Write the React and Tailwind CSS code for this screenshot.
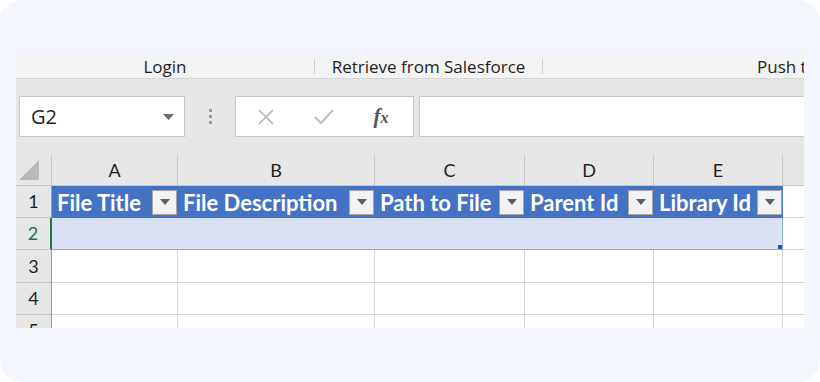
import React from 'react'

const cols = [
  { key: 'A', w: 126, title: 'File Title' },
  { key: 'B', w: 197, title: 'File Description' },
  { key: 'C', w: 150, title: 'Path to File' },
  { key: 'D', w: 129, title: 'Parent Id' },
  { key: 'E', w: 129, title: 'Library Id' },
  { key: 'F', w: 40, title: null },
]

const rowHeights = [32, 32, 33, 32, 32]

function FilterButton() {
  return (
    <div className="w-[25px] h-[25px] shrink-0 border border-[#a6a6a6] bg-[#f2f2f2] flex items-center justify-center">
      <svg width="10" height="6" viewBox="0 0 10 6">
        <path d="M0 0 L10 0 L5 6 Z" fill="#5f5f5f" />
      </svg>
    </div>
  )
}

function Ribbon() {
  return (
    <div className="h-[24px] shrink-0 flex items-center bg-[#f3f3f3] border-b border-[#d4d4d4] text-[17px] font-medium text-[#1f1f1f] whitespace-nowrap font-['Open_Sans',sans-serif]">
      <div className="w-[298px] shrink-0 text-center">Login</div>
      <div className="w-px h-[15px] bg-[#d0d0d0] shrink-0" />
      <div className="w-[227px] shrink-0 text-center">Retrieve from Salesforce</div>
      <div className="w-px h-[15px] bg-[#d0d0d0] shrink-0" />
      <div className="pl-[214px]">Push to Salesforce</div>
    </div>
  )
}

function FormulaBar() {
  return (
    <div className="h-[76px] shrink-0 flex items-start pt-[17px] pl-[3px] bg-[#e6e6e6]">
      <div className="w-[166px] h-[41px] shrink-0 bg-white border border-[#c6c6c6] flex items-center justify-between pl-[11px] pr-[10px]">
        <span className="text-[20px] text-[#262626] font-['Open_Sans',sans-serif]">G2</span>
        <svg width="11" height="6" viewBox="0 0 11 6">
          <path d="M0 0 L11 0 L5.5 6 Z" fill="#6b6b6b" />
        </svg>
      </div>
      <div className="w-[50px] h-[41px] shrink-0 flex flex-col items-center justify-center gap-[3px]">
        <span className="w-[3px] h-[3px] bg-[#9a9a9a]" />
        <span className="w-[3px] h-[3px] bg-[#9a9a9a]" />
        <span className="w-[3px] h-[3px] bg-[#9a9a9a]" />
      </div>
      <div className="w-[179px] h-[41px] shrink-0 bg-white border border-[#c6c6c6] flex items-center">
        <div className="w-[60px] flex justify-center">
          <svg width="18" height="18" viewBox="0 0 18 18">
            <path d="M2 2 L16 16 M16 2 L2 16" stroke="#b3b3b3" strokeWidth="1.6" />
          </svg>
        </div>
        <div className="w-[55px] flex justify-center">
          <svg width="22" height="18" viewBox="0 0 22 18">
            <path d="M2 9 L8 15 L20 2" stroke="#c2c2c2" strokeWidth="2.4" fill="none" />
          </svg>
        </div>
        <div className="w-[60px] flex justify-center">
          <span className="text-[21px] italic font-bold text-[#555] font-['Liberation_Serif',serif] leading-none">
            f<span className="text-[16px]">x</span>
          </span>
        </div>
      </div>
      <div className="flex-1 h-[41px] ml-[5px] bg-white border border-[#c6c6c6] border-r-0" />
    </div>
  )
}

function ColumnHeader() {
  return (
    <div className="h-[31px] shrink-0 flex bg-[#e6e6e6] border-b border-[#c6c6c6] font-['Lato',sans-serif] text-[18px] text-[#1f1f1f]">
      <div className="w-[36px] shrink-0 border-r border-[#c6c6c6] relative">
        <svg className="absolute left-[3px] bottom-[5px]" width="20" height="20" viewBox="0 0 20 20">
          <path d="M20 0 L20 20 L0 20 Z" fill="#b9b9b9" />
        </svg>
      </div>
      {cols.map((c) => (
        <div
          key={c.key}
          style={{ width: c.w }}
          className="shrink-0 border-r border-[#c6c6c6] flex items-center justify-center pt-[1px]"
        >
          {c.title ? c.key : ''}
        </div>
      ))}
    </div>
  )
}

function Row({ index, height }) {
  const n = index + 1
  const selected = n === 2
  return (
    <div style={{ height }} className="shrink-0 flex">
      <div
        className={
          'w-[36px] shrink-0 bg-[#e6e6e6] border-b border-[#c6c6c6] flex items-center justify-center font-[\'Lato\',sans-serif] text-[18px] ' +
          (selected ? 'border-r-2 border-r-[#217346] text-[#217346]' : 'border-r border-r-[#9e9e9e] text-[#1f1f1f]')
        }
      >
        {n}
      </div>
      {cols.map((c, i) => {
        const inTable = c.title !== null
        let cls = 'shrink-0 flex items-center border-b '
        if (n === 1 && inTable) {
          cls += 'bg-[#4472c4] border-[#4472c4] pl-[5px] pr-[1px] pt-[1px] justify-between'
        } else if (n === 2 && inTable) {
          cls += 'bg-[#d9e1f2] border-[#8ea9db]'
          if (i === 4) cls += ' border-r border-r-[#8ea9db] relative'
        } else {
          cls += 'bg-white border-[#d4d4d4] border-r border-r-[#d4d4d4]'
        }
        return (
          <div key={c.key} style={{ width: c.w }} className={cls}>
            {n === 1 && inTable && (
              <>
                <span className="text-white font-bold text-[22px] leading-none pt-[2px] whitespace-nowrap font-['Lato',sans-serif]">
                  {c.title}
                </span>
                <FilterButton />
              </>
            )}
            {n === 2 && i === 4 && (
              <span className="absolute right-0 bottom-0 w-[4px] h-[4px] bg-[#2f4fa8]" />
            )}
          </div>
        )
      })}
    </div>
  )
}

export default function App() {
  return (
    <div className="w-[820px] h-[382px] bg-white">
      <div className="w-full h-full rounded-[22px] bg-[#f4f6fd] pt-[55px] px-[16px]">
        <div className="w-[788px] h-[273px] overflow-hidden bg-[#e6e6e6] flex flex-col">
          <Ribbon />
          <FormulaBar />
          <ColumnHeader />
          {rowHeights.map((h, i) => (
            <Row key={i} index={i} height={h} />
          ))}
        </div>
      </div>
    </div>
  )
}
